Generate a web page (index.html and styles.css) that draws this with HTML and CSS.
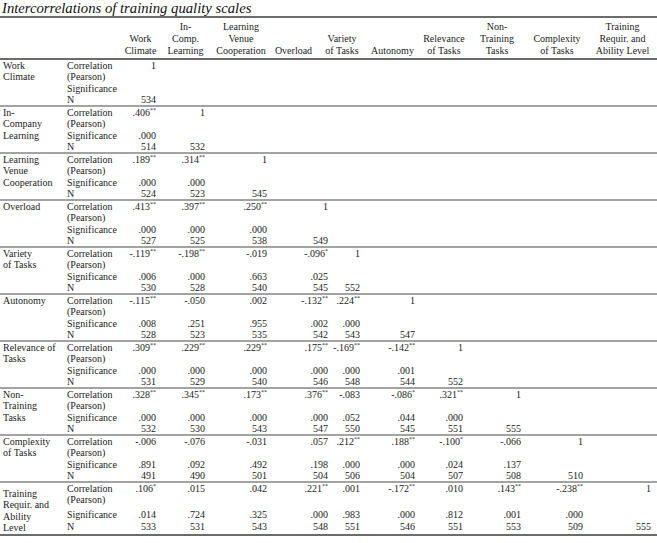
FILE: index.html
```html
<!DOCTYPE html>
<html>
<head>
<meta charset="utf-8">
<link rel="stylesheet" href="styles.css">
</head>
<body>
<div class="title">Intercorrelations of training quality scales</div>
<table class="corr-table">
<colgroup>
<col class="w-label"><col class="w-stat">
<col class="w-c1"><col class="w-c2"><col class="w-c3"><col class="w-c4"><col class="w-c5">
<col class="w-c6"><col class="w-c7"><col class="w-c8"><col class="w-c9"><col class="w-c10">
</colgroup>
<thead>
<tr>
<th colspan="2"></th>
<th>Work<br>Climate</th>
<th>In-<br>Comp.<br>Learning</th>
<th>Learning<br>Venue<br>Cooperation</th>
<th class="h-over">Overload</th>
<th class="h-var"><span class="shift">Variety<br>of Tasks</span></th>
<th>Autonomy</th>
<th>Relevance<br>of Tasks</th>
<th>Non-<br>Training<br>Tasks</th>
<th>Complexity<br>of Tasks</th>
<th>Training<br>Requir. and<br>Ability Level</th>
</tr>
</thead>
<tbody>
<!-- Work Climate -->
<tr class="corr"><td class="label" rowspan="3">Work<br>Climate</td><td class="stat">Correlation<br>(Pearson)</td>
<td>1</td><td></td><td></td><td></td><td></td><td></td><td></td><td></td><td></td><td></td></tr>
<tr><td class="stat">Significance</td><td></td><td></td><td></td><td></td><td></td><td></td><td></td><td></td><td></td><td></td></tr>
<tr><td class="stat">N</td><td>534</td><td></td><td></td><td></td><td></td><td></td><td></td><td></td><td></td><td></td></tr>
<!-- In-Company -->
<tr class="corr"><td class="label" rowspan="3">In-<br>Company<br>Learning</td><td class="stat">Correlation<br>(Pearson)</td>
<td>.406<sup>**</sup></td><td>1</td><td></td><td></td><td></td><td></td><td></td><td></td><td></td><td></td></tr>
<tr><td class="stat">Significance</td><td>.000</td><td></td><td></td><td></td><td></td><td></td><td></td><td></td><td></td><td></td></tr>
<tr><td class="stat">N</td><td>514</td><td>532</td><td></td><td></td><td></td><td></td><td></td><td></td><td></td><td></td></tr>
<!-- LVC -->
<tr class="corr"><td class="label" rowspan="3">Learning<br>Venue<br>Cooperation</td><td class="stat">Correlation<br>(Pearson)</td>
<td>.189<sup>**</sup></td><td>.314<sup>**</sup></td><td>1</td><td></td><td></td><td></td><td></td><td></td><td></td><td></td></tr>
<tr><td class="stat">Significance</td><td>.000</td><td>.000</td><td></td><td></td><td></td><td></td><td></td><td></td><td></td><td></td></tr>
<tr><td class="stat">N</td><td>524</td><td>523</td><td>545</td><td></td><td></td><td></td><td></td><td></td><td></td><td></td></tr>
<!-- Overload -->
<tr class="corr"><td class="label" rowspan="3">Overload</td><td class="stat">Correlation<br>(Pearson)</td>
<td>.413<sup>**</sup></td><td>.397<sup>**</sup></td><td>.250<sup>**</sup></td><td>1</td><td></td><td></td><td></td><td></td><td></td><td></td></tr>
<tr><td class="stat">Significance</td><td>.000</td><td>.000</td><td>.000</td><td></td><td></td><td></td><td></td><td></td><td></td><td></td></tr>
<tr><td class="stat">N</td><td>527</td><td>525</td><td>538</td><td>549</td><td></td><td></td><td></td><td></td><td></td><td></td></tr>
<!-- Variety -->
<tr class="corr"><td class="label" rowspan="3">Variety<br>of Tasks</td><td class="stat">Correlation<br>(Pearson)</td>
<td>-.119<sup>**</sup></td><td>-.198<sup>**</sup></td><td>-.019</td><td>-.096<sup>*</sup></td><td>1</td><td></td><td></td><td></td><td></td><td></td></tr>
<tr><td class="stat">Significance</td><td>.006</td><td>.000</td><td>.663</td><td>.025</td><td></td><td></td><td></td><td></td><td></td><td></td></tr>
<tr><td class="stat">N</td><td>530</td><td>528</td><td>540</td><td>545</td><td>552</td><td></td><td></td><td></td><td></td><td></td></tr>
<!-- Autonomy -->
<tr class="corr"><td class="label" rowspan="3">Autonomy</td><td class="stat">Correlation<br>(Pearson)</td>
<td>-.115<sup>**</sup></td><td>-.050</td><td>.002</td><td>-.132<sup>**</sup></td><td>.224<sup>**</sup></td><td>1</td><td></td><td></td><td></td><td></td></tr>
<tr><td class="stat">Significance</td><td>.008</td><td>.251</td><td>.955</td><td>.002</td><td>.000</td><td></td><td></td><td></td><td></td><td></td></tr>
<tr><td class="stat">N</td><td>528</td><td>523</td><td>535</td><td>542</td><td>543</td><td>547</td><td></td><td></td><td></td><td></td></tr>
<!-- Relevance -->
<tr class="corr"><td class="label" rowspan="3">Relevance of<br>Tasks</td><td class="stat">Correlation<br>(Pearson)</td>
<td>.309<sup>**</sup></td><td>.229<sup>**</sup></td><td>.229<sup>**</sup></td><td>.175<sup>**</sup></td><td>-.169<sup>**</sup></td><td>-.142<sup>**</sup></td><td>1</td><td></td><td></td><td></td></tr>
<tr><td class="stat">Significance</td><td>.000</td><td>.000</td><td>.000</td><td>.000</td><td>.000</td><td>.001</td><td></td><td></td><td></td><td></td></tr>
<tr><td class="stat">N</td><td>531</td><td>529</td><td>540</td><td>546</td><td>548</td><td>544</td><td>552</td><td></td><td></td><td></td></tr>
<!-- Non-Training -->
<tr class="corr"><td class="label" rowspan="3">Non-<br>Training<br>Tasks</td><td class="stat">Correlation<br>(Pearson)</td>
<td>.328<sup>**</sup></td><td>.345<sup>**</sup></td><td>.173<sup>**</sup></td><td>.376<sup>**</sup></td><td>-.083</td><td>-.086<sup>*</sup></td><td>.321<sup>**</sup></td><td>1</td><td></td><td></td></tr>
<tr><td class="stat">Significance</td><td>.000</td><td>.000</td><td>.000</td><td>.000</td><td>.052</td><td>.044</td><td>.000</td><td></td><td></td><td></td></tr>
<tr><td class="stat">N</td><td>532</td><td>530</td><td>543</td><td>547</td><td>550</td><td>545</td><td>551</td><td>555</td><td></td><td></td></tr>
<!-- Complexity -->
<tr class="corr"><td class="label" rowspan="3">Complexity<br>of Tasks</td><td class="stat">Correlation<br>(Pearson)</td>
<td>-.006</td><td>-.076</td><td>-.031</td><td>.057</td><td>.212<sup>**</sup></td><td>.188<sup>**</sup></td><td>-.100<sup>*</sup></td><td>-.066</td><td>1</td><td></td></tr>
<tr><td class="stat">Significance</td><td>.891</td><td>.092</td><td>.492</td><td>.198</td><td>.000</td><td>.000</td><td>.024</td><td>.137</td><td></td><td></td></tr>
<tr><td class="stat">N</td><td>491</td><td>490</td><td>501</td><td>504</td><td>506</td><td>504</td><td>507</td><td>508</td><td>510</td><td></td></tr>
<!-- Training -->
<tr class="corr"><td class="label last-label" rowspan="3">Training<br>Requir. and<br>Ability<br>Level</td><td class="stat">Correlation<br>(Pearson)</td>
<td>.106<sup>*</sup></td><td>.015</td><td>.042</td><td>.221<sup>**</sup></td><td>.001</td><td>-.172<sup>**</sup></td><td>.010</td><td>.143<sup>**</sup></td><td>-.238<sup>**</sup></td><td>1</td></tr>
<tr><td class="stat">Significance</td><td>.014</td><td>.724</td><td>.325</td><td>.000</td><td>.983</td><td>.000</td><td>.812</td><td>.001</td><td>.000</td><td></td></tr>
<tr><td class="stat">N</td><td>533</td><td>531</td><td>543</td><td>548</td><td>551</td><td>546</td><td>551</td><td>553</td><td>509</td><td>555</td></tr>
</tbody>
</table>
</body>
</html>
```
FILE: styles.css
```css
html, body {
  margin: 0;
  padding: 0;
  background: #ffffff;
}
body {
  font-family: "Liberation Serif", "Times New Roman", serif;
  color: #1c1c1c;
  width: 657px;
}
.title {
  font-style: italic;
  font-size: 14.7px;
  line-height: 16px;
  height: 16px;
  padding-left: 2px;
  color: #111;
  white-space: nowrap;
}
.corr-table {
  width: 657px;
  table-layout: fixed;
  border-collapse: collapse;
  font-size: 10px;
  line-height: 11.25px;
  border-top: 2px solid #6c6c6c;
  border-bottom: 2px solid #6c6c6c;
}
.w-label { width: 65px; }
.w-stat { width: 55px; }
.w-c1 { width: 41px; }
.w-c2 { width: 49px; }
.w-c3 { width: 62px; }
.w-c4 { width: 61px; }
.w-c5 { width: 32px; }
.w-c6 { width: 55px; }
.w-c7 { width: 48px; }
.w-c8 { width: 58px; }
.w-c9 { width: 62px; }
.w-c10 { width: 69px; }

.corr-table th {
  font-weight: normal;
  text-align: center;
  vertical-align: bottom;
  line-height: 12px;
  padding: 3px 1px 1px;
  border-bottom: 2px solid #6c6c6c;
  white-space: nowrap;
}
.corr-table th.h-over {
  padding-right: 19px;
}
.corr-table th.h-var {
  padding: 3px 0 1px;
}
.corr-table th.h-var .shift {
  display: inline-block;
  margin-left: -14px;
}
.corr-table td {
  padding: 0 5px 0 0;
  text-align: right;
  vertical-align: top;
  white-space: nowrap;
}
.corr-table td:last-child {
  padding-right: 6px;
}
.corr-table td.label {
  text-align: left;
  padding-left: 3px;
  padding-right: 0;
}
.corr-table td.stat {
  text-align: left;
  padding-left: 2px;
  padding-right: 0;
}
.corr-table tr.corr td {
  border-top: 2px solid #a3a3a3;
}
.corr-table tbody tr.corr:first-child td {
  border-top: none;
}
.corr-table sup {
  font-size: 6px;
  line-height: 0;
  vertical-align: 4px;
}
.corr-table td.last-label {
  padding-top: 5px;
  padding-bottom: 1px;
}
```
